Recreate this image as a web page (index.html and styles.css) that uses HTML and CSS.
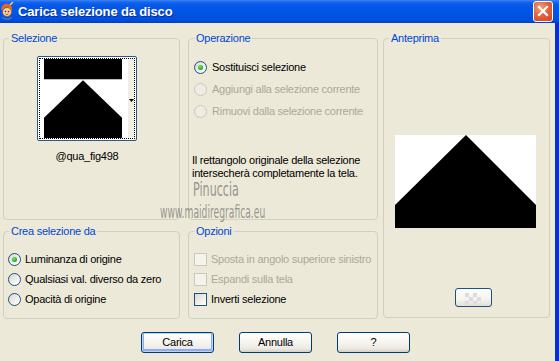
FILE: index.html
```html
<!DOCTYPE html>
<html>
<head>
<meta charset="utf-8">
<title>Carica selezione da disco</title>
<link rel="stylesheet" href="styles.css">
</head>
<body>
<div class="window">
  <div class="titlebar">
    <svg class="app-icon" width="14" height="18" viewBox="0 0 14 18">
      <path d="M1 7 Q2 1 8 2 Q13 3 12 9 L10 8 Q9 5 6 5 Q3 6 3 9 Z" fill="#e0662a"/>
      <circle cx="7" cy="10" r="4.5" fill="#f6cf9f" stroke="#a0522d" stroke-width="0.8"/>
      <circle cx="5.5" cy="9.5" r="0.8" fill="#333"/>
      <circle cx="8.5" cy="9.5" r="0.8" fill="#333"/>
      <path d="M5.5 12 Q7 13.2 8.5 12" stroke="#a33" stroke-width="0.8" fill="none"/>
      <path d="M10 3 L13 0" stroke="#f2d64b" stroke-width="1.5"/>
      <path d="M2 15 L5 17 L9 17 L12 15" stroke="#3a7bd5" stroke-width="1.4" fill="none"/>
    </svg>
    <span class="title">Carica selezione da disco</span>
    <div class="close">
      <svg width="18" height="19" viewBox="0 0 18 19">
        <path d="M5 5 L13 13 M13 5 L5 13" stroke="#fff" stroke-width="2.2" stroke-linecap="square"/>
      </svg>
    </div>
  </div>

  <div class="client">
    <div class="groups">
      <div class="col col1">
        <div class="group g-top">
          <div class="legend">Selezione</div>
          <div class="thumb-wrap">
            <div class="thumb">
              <div class="thumb-inner">
                <svg class="thumb-img" width="78" height="78" viewBox="0 0 78 78" preserveAspectRatio="none">
                  <rect x="0" y="0" width="78" height="78" fill="#fff"/>
                  <rect x="0" y="0" width="78" height="20" fill="#000"/>
                  <polygon points="39,21 78,58 78,78 0,78 0,58" fill="#000"/>
                </svg>
                <div class="thumb-gap"></div>
                <div class="thumb-strip">
                  <svg width="5" height="3" viewBox="0 0 5 3"><polygon points="0,0 5,0 2.5,3" fill="#000"/></svg>
                </div>
              </div>
            </div>
            <div class="thumb-label">@qua_fig498</div>
          </div>
        </div>

        <div class="group g-bot">
          <div class="legend">Crea selezione da</div>
          <div class="opts">
            <div class="opt"><span class="radio checked"></span><span>Luminanza di origine</span></div>
            <div class="opt"><span class="radio"></span><span>Qualsiasi val. diverso da zero</span></div>
            <div class="opt"><span class="radio"></span><span>Opacità di origine</span></div>
          </div>
        </div>
      </div>

      <div class="col col2">
        <div class="group g-top">
          <div class="legend">Operazione</div>
          <div class="opts opts-op">
            <div class="opt"><span class="radio checked"></span><span>Sostituisci selezione</span></div>
            <div class="opt disabled"><span class="radio"></span><span>Aggiungi alla selezione corrente</span></div>
            <div class="opt disabled"><span class="radio"></span><span>Rimuovi dalla selezione corrente</span></div>
          </div>
          <p class="note">Il rettangolo originale della selezione<br>intersecherà completamente la tela.</p>
        </div>

        <div class="group g-bot">
          <div class="legend">Opzioni</div>
          <div class="opts opts-chk">
            <div class="opt disabled"><span class="check"></span><span>Sposta in angolo superiore sinistro</span></div>
            <div class="opt disabled"><span class="check"></span><span>Espandi sulla tela</span></div>
            <div class="opt"><span class="check"></span><span>Inverti selezione</span></div>
          </div>
        </div>
      </div>

      <div class="col col3">
        <div class="group g-prev">
          <div class="legend">Anteprima</div>
          <svg class="preview" width="141" height="93" viewBox="0 0 141 93">
            <rect x="0" y="0" width="141" height="93" fill="#fff"/>
            <polygon points="71,0 141,70 141,93 0,93 0,70" fill="#000"/>
          </svg>
          <div class="mini-btn">
            <svg width="35" height="17" viewBox="0 0 35 17">
              <g fill="#dcdcdc">
                <rect x="9" y="4" width="4" height="4"/>
                <rect x="17" y="4" width="4" height="4"/>
                <rect x="13" y="8" width="4" height="4"/>
                <rect x="21" y="8" width="4" height="4"/>
                <rect x="9" y="12" width="4" height="3"/>
                <rect x="17" y="12" width="4" height="3"/>
              </g>
            </svg>
          </div>
        </div>
      </div>
    </div>

    <div class="buttons">
      <div class="btn default">Carica</div>
      <div class="btn">Annulla</div>
      <div class="btn">?</div>
    </div>

    <div class="wm wm-name">Pinuccia</div>
    <div class="wm wm-site">www.maidiregrafica.eu</div>
  </div>
</div>
</body>
</html>
```

FILE: styles.css
```css
* { box-sizing: border-box; }

html, body {
  margin: 0;
  padding: 0;
  background: #ECE9D8;
}

.window {
  width: 559px;
  height: 361px;
  display: flex;
  flex-direction: column;
  overflow: hidden;
  font-family: "Liberation Sans", Arial, sans-serif;
  font-size: 11px;
  letter-spacing: -0.25px;
  color: #000;
}

/* ---------- title bar ---------- */
.titlebar {
  flex: none;
  height: 23px;
  display: flex;
  align-items: flex-start;
  background: linear-gradient(to bottom,
    #3d86f3 0px, #1866ee 2px, #0759e8 5px, #0055e5 11px,
    #0052e0 17px, #004ad6 21px, #003fc5 23px);
}

.app-icon {
  flex: none;
  margin-top: 2px;
  margin-left: 0;
}

.title {
  margin-left: 4px;
  line-height: 23px;
  font-family: "Liberation Sans", Arial, sans-serif;
  font-weight: bold;
  font-size: 13px;
  letter-spacing: -0.15px;
  color: #fff;
  text-shadow: 1px 1px 0 #0b2a9e;
}

.close {
  margin-left: auto;
  margin-right: 6px;
  margin-top: 1px;
  width: 20px;
  height: 21px;
  border: 1px solid #fff;
  border-radius: 3px;
  background: radial-gradient(circle at 35% 30%, #f3a184 0%, #e5633c 45%, #cf4520 100%);
  display: flex;
  align-items: center;
  justify-content: center;
}

/* ---------- client ---------- */
.client {
  flex: 1;
  position: relative;
  background: #ECE9D8;
  border-right: 4px solid #0a2ecf;
  padding: 15px 0 0 3px;
}

.groups {
  display: flex;
  align-items: flex-start;
}

.col {
  display: flex;
  flex-direction: column;
  gap: 11px;
}

.col1 { width: 177px; }
.col2 { width: 190px; margin-left: 8px; }
.col3 { width: 167px; margin-left: 5px; }

.group {
  border: 1px solid #d0d0bf;
  border-radius: 4px;
  display: flex;
  flex-direction: column;
  align-items: flex-start;
}

.g-top { height: 182px; }
.g-bot { height: 88px; }
.g-prev { height: 280px; }

.legend {
  margin: -7px 0 0 5px;
  padding: 0 2px;
  line-height: 13px;
  background: #ECE9D8;
  color: #0046d5;
  white-space: nowrap;
}

/* ---------- Selezione ---------- */
.thumb-wrap {
  margin: 11px 0 0 33px;
  width: 100px;
  display: flex;
  flex-direction: column;
  align-items: center;
}

.thumb {
  width: 100px;
  height: 85px;
  border: 1px solid #2a5788;
  border-radius: 2px;
  padding: 1px;
  background: #fff;
}

.thumb-inner {
  height: 100%;
  border: 1px dotted #000;
  display: flex;
}

.thumb-img {
  display: block;
  margin-left: 4px;
  width: 78px;
  height: 100%;
}

.thumb-gap {
  width: 6px;
}

.thumb-strip {
  width: 6px;
  background: #f1efe4;
  display: flex;
  align-items: center;
  justify-content: center;
}

.thumb-strip svg { display: block; margin-top: 3px; margin-left: 1px; }

.thumb-label {
  margin-top: 9px;
  line-height: 13px;
  white-space: nowrap;
}

/* ---------- options ---------- */
.opts {
  display: flex;
  flex-direction: column;
  margin: 11px 0 0 4px;
}

.opts-op {
  margin: 12px 0 0 5px;
  gap: 2px;
}

.opts-chk {
  margin: 11px 0 0 5px;
}

.opt {
  height: 20px;
  display: flex;
  align-items: center;
  gap: 4px;
  white-space: nowrap;
}

.opts-op .opt { gap: 5px; }

.opt.disabled { color: #aca899; }

.radio {
  flex: none;
  width: 13px;
  height: 13px;
  border-radius: 50%;
  border: 1px solid #1c5180;
  background: linear-gradient(135deg, #d8d7cf 0%, #f2f1ec 60%, #ffffff 100%);
  display: flex;
  align-items: center;
  justify-content: center;
}

.radio.checked::after {
  content: "";
  width: 5px;
  height: 5px;
  border-radius: 50%;
  background: radial-gradient(circle at 40% 35%, #74e474 0%, #2bb52b 55%, #1a8d1a 100%);
}

.disabled .radio {
  border-color: #cac8bb;
  background: #efede3;
}

.check {
  flex: none;
  width: 13px;
  height: 13px;
  border: 1px solid #1c5180;
  background: linear-gradient(135deg, #d8d7cf 0%, #f2f1ec 60%, #ffffff 100%);
}

.disabled .check {
  border-color: #cac8bb;
  background: #f4f3ec;
}

.note {
  margin: 33px 0 0 3px;
  line-height: 13px;
  white-space: nowrap;
}

/* ---------- Anteprima ---------- */
.preview {
  display: block;
  margin: 90px 0 0 11px;
}

.mini-btn {
  margin: 60px 0 0 71px;
  width: 37px;
  height: 19px;
  border: 1px solid #1c5180;
  border-radius: 3px;
  background: linear-gradient(to bottom, #ffffff 0%, #f4f3ee 60%, #e3e0d5 100%);
  display: flex;
  align-items: center;
  justify-content: center;
}

.mini-btn svg { display: block; }

/* ---------- buttons ---------- */
.buttons {
  display: flex;
  gap: 25px;
  margin: 13px 0 0 138px;
}

.btn {
  width: 73px;
  height: 21px;
  border: 1px solid #003c74;
  border-radius: 3px;
  background: linear-gradient(to bottom, #ffffff 0%, #f5f4ef 50%, #ecebe5 80%, #d6d0c5 100%);
  display: flex;
  align-items: center;
  justify-content: center;
  line-height: 13px;
}

.btn.default {
  box-shadow: inset 0 0 0 1px #bcd1f6, inset 0 -1px 0 2px #8fadeb;
}

/* ---------- watermark ---------- */
.wm {
  position: absolute;
  white-space: nowrap;
  font-family: "Liberation Sans Narrow", "DejaVu Sans Condensed", "Liberation Sans", sans-serif;
  color: rgba(110, 110, 110, 0.7);
  line-height: 1;
  letter-spacing: 0;
  transform-origin: 0 0;
}

.wm-name {
  left: 193px;
  top: 156px;
  font-size: 20px;
  transform: scaleX(0.62);
}

.wm-site {
  left: 160px;
  top: 181px;
  font-size: 17px;
  transform: scaleX(0.6);
}
```
